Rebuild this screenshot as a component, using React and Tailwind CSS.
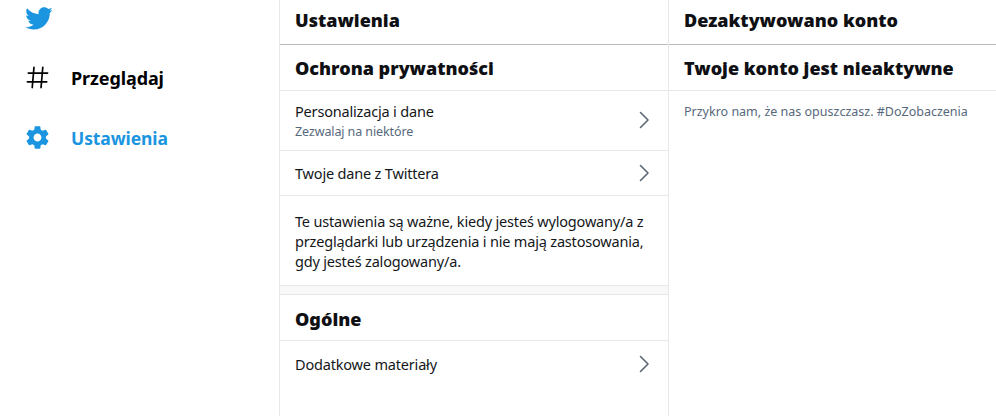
function Chevron({ className = "" }) {
  return (
    <svg width="24" height="24" viewBox="0 0 24 24" className={`shrink-0 ${className}`} fill="none" stroke="#5b6773" strokeWidth="1.6" strokeLinecap="round" strokeLinejoin="round">
      <path d="M8.5 4.5 16 12l-7.5 7.5" />
    </svg>
  );
}
function Row({ title, sub, h, chevron }) {
  return (
    <div className={`flex items-center justify-between pl-[15px] pr-[12px] border-b border-[#e6e8ea] ${h}`}>
      <div>
        <div className="text-[14.5px] tracking-[-0.18px] leading-[20px] text-[#14171a] -mt-[1px]">{title}</div>
        {sub && <div className="text-[12.5px] tracking-[-0.1px] leading-[18px] text-[#57687c] mt-[2px] -mb-[2px]">{sub}</div>}
      </div>
      <Chevron className={chevron} />
    </div>
  );
}
function Head({ children }) {
  return (
    <div className="h-[45px] border-b border-[#b8bcc0] pl-[15px] flex items-center">
      <h2 className="text-[18px] font-black text-[#0f1014] leading-none pb-[5px]">{children}</h2>
    </div>
  );
}
function Section({ children, className = "" }) {
  return (
    <div className="h-[46px] border-b border-[#e6e8ea] pl-[15px] flex items-center">
      <h3 className={`text-[18px] font-black text-[#0f1014] leading-none ${className}`}>{children}</h3>
    </div>
  );
}
export default function App() {
  return (
    <div className="flex w-[996px] h-[416px] overflow-hidden bg-white" style={{ fontFamily: '"Noto Sans", sans-serif' }}>
      <nav className="w-[280px] shrink-0 border-r border-[#e6e8ea] pl-[25px] flex flex-col">
        <svg width="29" height="29" viewBox="0 0 24 24" fill="#1b95e0" className="mt-[4px] -ml-[1px]">
          <path d="M23.643 4.937c-.835.37-1.732.62-2.675.733.962-.576 1.7-1.49 2.048-2.578-.9.534-1.897.922-2.958 1.13-.85-.904-2.06-1.47-3.4-1.47-2.572 0-4.658 2.086-4.658 4.66 0 .364.042.718.12 1.06-3.873-.195-7.304-2.05-9.602-4.868-.4.69-.63 1.49-.63 2.342 0 1.616.823 3.043 2.072 3.878-.764-.025-1.482-.234-2.11-.583v.06c0 2.257 1.605 4.14 3.737 4.568-.392.106-.803.162-1.227.162-.3 0-.593-.028-.877-.082.593 1.85 2.313 3.198 4.352 3.234-1.595 1.25-3.604 1.995-5.786 1.995-.376 0-.747-.022-1.112-.065 2.062 1.323 4.51 2.093 7.14 2.093 8.57 0 13.255-7.098 13.255-13.254 0-.2-.005-.402-.014-.602.91-.658 1.7-1.477 2.323-2.41z" />
        </svg>
        <div className="flex items-center gap-[20px] mt-[30px] h-[30px]">
          <svg width="27" height="27" viewBox="0 0 24 24" fill="#000000" className="shrink-0 -ml-[1px] -mt-[2px]">
            <path d="M21 7.337h-3.93l.372-4.272c.036-.412-.27-.775-.682-.812-.417-.03-.776.27-.812.683l-.383 4.4h-6.32l.37-4.27c.037-.413-.27-.776-.68-.813-.42-.03-.777.27-.813.683l-.382 4.4H3.782c-.414 0-.75.337-.75.75s.336.75.75.75H7.61l-.55 6.327H3c-.414 0-.75.336-.75.75s.336.75.75.75h3.93l-.372 4.272c-.036.412.27.775.682.812l.066.003c.385 0 .712-.295.746-.686l.383-4.4h6.32l-.37 4.27c-.036.413.27.776.682.813l.066.003c.385 0 .712-.295.746-.686l.382-4.4h3.957c.413 0 .75-.337.75-.75s-.337-.75-.75-.75h-3.83l.55-6.326H21c.413 0 .75-.336.75-.75s-.337-.75-.75-.75zm-6.115 7.826h-6.32l.55-6.326h6.32l-.55 6.326z" />
          </svg>
          <span className="text-[18px] tracking-[-0.1px] font-bold text-black">Przeglądaj</span>
        </div>
        <div className="flex items-center gap-[20px] mt-[30px] h-[30px]">
          <svg width="27" height="27" viewBox="0 0 24 24" fill="#1b95e0" className="shrink-0 -ml-[1px] -mt-[1px]">
            <path fillRule="evenodd" d="M19.43 12.98c.04-.32.07-.64.07-.98s-.03-.66-.07-.98l2.11-1.65c.19-.15.24-.42.12-.64l-2-3.46c-.12-.22-.39-.3-.61-.22l-2.49 1c-.52-.4-1.08-.73-1.69-.98l-.38-2.65C14.46 2.18 14.25 2 14 2h-4c-.25 0-.46.18-.49.42l-.38 2.65c-.61.25-1.17.59-1.69.98l-2.49-1c-.23-.09-.49 0-.61.22l-2 3.46c-.13.22-.07.49.12.64l2.11 1.65c-.04.32-.07.65-.07.98s.03.66.07.98l-2.11 1.65c-.19.15-.24.42-.12.64l2 3.46c.12.22.39.3.61.22l2.49-1c.52.4 1.08.73 1.69.98l.38 2.65c.03.24.24.42.49.42h4c.25 0 .46-.18.49-.42l.38-2.65c.61-.25 1.17-.59 1.69-.98l2.49 1c.23.09.49 0 .61-.22l2-3.46c.12-.22.07-.49-.12-.64l-2.11-1.65zM12 15.5c-1.93 0-3.5-1.57-3.5-3.5s1.57-3.5 3.5-3.5 3.5 1.57 3.5 3.5-1.57 3.5-3.5 3.5z" />
          </svg>
          <span className="text-[17.5px] tracking-[-0.1px] font-bold text-[#1b95e0]">Ustawienia</span>
        </div>
      </nav>
      <main className="w-[389px] shrink-0 border-r border-[#e6e8ea] flex flex-col">
        <Head>Ustawienia</Head>
        <Section>Ochrona prywatności</Section>
        <Row title="Personalizacja i dane" sub="Zezwalaj na niektóre" h="h-[60px]" chevron="-mt-[2px]" />
        <Row title="Twoje dane z Twittera" h="h-[45px]" />
        <div className="h-[90px] border-b border-[#e6e8ea] pl-[15px] pt-[15px]">
          <p className="text-[14.5px] tracking-[-0.18px] leading-[20px] text-[#14171a] whitespace-nowrap">
            Te ustawienia są ważne, kiedy jesteś wylogowany/a z<br />
            przeglądarki lub urządzenia i nie mają zastosowania,<br />
            gdy jesteś zalogowany/a.
          </p>
        </div>
        <div className="h-[9px] bg-[#f8f8f8] border-b border-[#e6e8ea]" />
        <Section className="pt-[2px]">Ogólne</Section>
        <div className="flex items-center justify-between pl-[15px] pr-[12px] h-[46px]">
          <span className="text-[14.5px] tracking-[-0.18px] leading-[20px] text-[#14171a]">Dodatkowe materiały</span>
          <Chevron />
        </div>
      </main>
      <section className="flex-1 flex flex-col">
        <Head>Dezaktywowano konto</Head>
        <Section>Twoje konto jest nieaktywne</Section>
        <p className="pl-[15px] pt-[12px] text-[12.5px] leading-[18px] text-[#57687c]">Przykro nam, że nas opuszczasz. #DoZobaczenia</p>
      </section>
    </div>
  );
}
